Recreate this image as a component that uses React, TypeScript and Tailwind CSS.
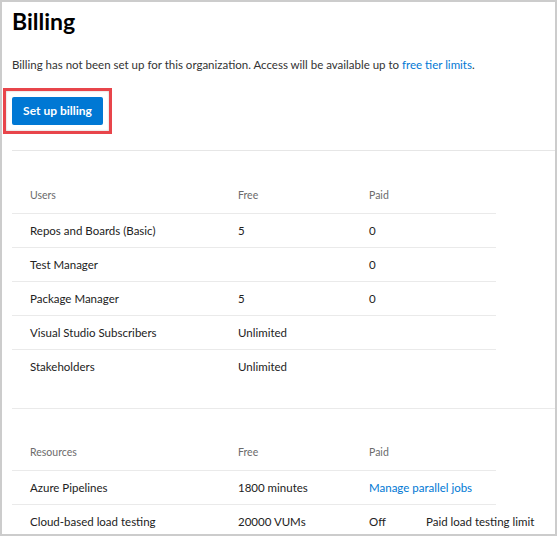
import React from "react";

type Row = { name: string; free?: string; paid?: React.ReactNode; extra?: string };

const users: Row[] = [
    { name: "Repos and Boards (Basic)", free: "5", paid: "0" },
    { name: "Test Manager", paid: "0" },
    { name: "Package Manager", free: "5", paid: "0" },
    { name: "Visual Studio Subscribers", free: "Unlimited" },
    { name: "Stakeholders", free: "Unlimited" },
];

const resources: Row[] = [
    {
        name: "Azure Pipelines",
        free: "1800 minutes",
        paid: <span className="text-[#0078d4]">Manage parallel jobs</span>,
    },
    { name: "Cloud-based load testing", free: "20000 VUMs", paid: "Off", extra: "Paid load testing limit" },
];

const BillingTable = ({ title, rows, headH }: { title: string; rows: Row[]; headH: string }) => {
    return (
        <div className="w-[484px]">
            <div className={headH + " flex items-end border-b border-[#eaeaea] pb-[9px] text-[10.5px] text-[#6b6b6b]"}>
                <div className="w-[226px] shrink-0 pl-[18px]">{title}</div>
                <div className="w-[131px] shrink-0">Free</div>
                <div>Paid</div>
            </div>
            {rows.map((r, i) => (
                <div
                    key={r.name}
                    className={
                        "flex h-[34px] items-center whitespace-nowrap text-[11.5px] text-[#222222] " +
                        (i < rows.length - 1 ? "border-b border-[#eaeaea]" : "")
                    }
                >
                    <div className="w-[226px] shrink-0 pl-[18px]">{r.name}</div>
                    <div className="w-[131px] shrink-0">{r.free}</div>
                    <div className="w-[57px] shrink-0">{r.paid}</div>
                    {r.extra && <div className="shrink-0">{r.extra}</div>}
                </div>
            ))}
        </div>
    );
};

export default function App() {
    return (
        <div
            className="relative h-[536px] w-[557px] overflow-hidden border-2 border-[#cccccc] bg-white"
            style={{ fontFamily: '"Segoe UI", Lato, "Noto Sans", sans-serif' }}
        >
            <div className="pl-[10px] pt-[3px]">
                <h1 className="text-[23px] font-bold leading-[32px] text-black">Billing</h1>
                <p className="mt-[20px] text-[11.5px] leading-[15px] text-[#333333]">
                    Billing has not been set up for this organization. Access will be available up to{" "}
                    <span className="text-[#0078d4]">free tier limits</span>.
                </p>
                <div className="ml-[-9px] mt-[16px] inline-block border-[3px] border-[#e8454b] p-[6px] shadow-[inset_0_0_2px_#bbbbbb]">
                    <button className="h-[28px] w-[91px] rounded-[2px] bg-[#0078d4] text-[12px] font-bold text-white">
                        Set up billing
                    </button>
                </div>
                <div className="mt-[16px] border-t border-[#e6e6e6]">
                    <BillingTable title="Users" rows={users} headH="h-[63px]" />
                </div>
                <div className="mt-[24px] border-t border-[#eaeaea]">
                    <BillingTable title="Resources" rows={resources} headH="h-[62px]" />
                </div>
            </div>
        </div>
    );
}
